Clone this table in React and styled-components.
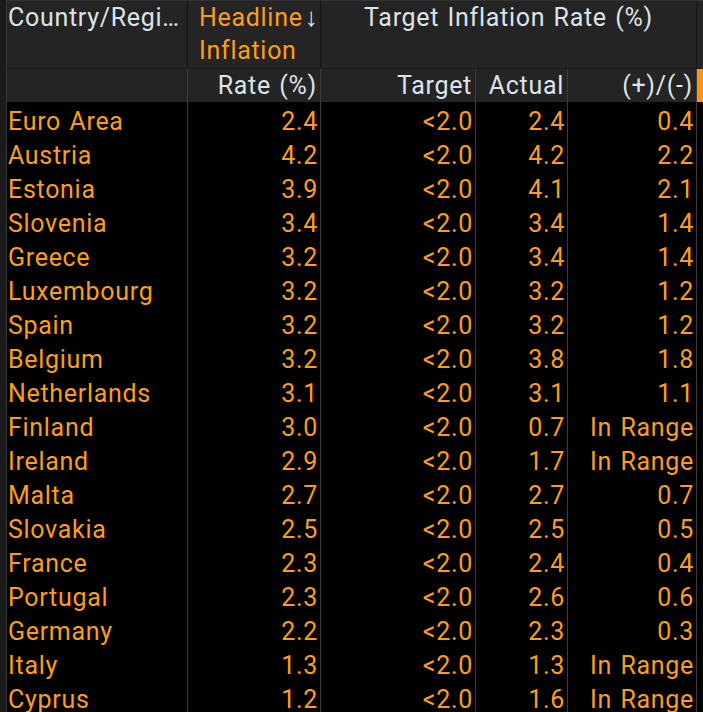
import React from "react";
import styled, { createGlobalStyle } from "styled-components";

const Global = createGlobalStyle`
  html, body { margin: 0; padding: 0; background: #1b1b1b; }
  body { font-family: Roboto, "Noto Sans", sans-serif; }
`;

const COLS = "181px 133px 155px 92px 129px 6px";
const ORANGE = "#fb9e1e";
const HEAD = "#dde3ea";

const Frame = styled.div`
  margin-left: 6px;
  border-left: 1px solid #3a3a3a;
  width: 696px;
  height: 712px;
  overflow: hidden;
  background: #000;
  font-size: 25px;
  line-height: 34px;
  letter-spacing: 0.7px;
  word-spacing: 1.5px;
`;

const HeadTop = styled.div`
  display: grid;
  grid-template-columns: 181px 133px 376px 6px;
  height: 68px;
  background: #242424;
  border-top: 1px solid #333;
  box-sizing: border-box;
`;

const HeadBottom = styled.div`
  display: grid;
  grid-template-columns: ${COLS};
  height: 34px;
  background: #242424;
  border-top: 1px solid #1a1a1a;
  box-sizing: border-box;
`;

const HCell = styled.div`
  box-sizing: border-box;
  border-right: 1px solid ${(p) => (p.$top ? "#141414" : "#3c3c3c")};
  color: ${(p) => (p.$accent ? ORANGE : HEAD)};
  text-align: ${(p) => p.$align || "left"};
  padding: ${(p) =>
    p.$align === "right" ? "0 3px 0 0" : p.$align === "center" ? "0" : `0 0 0 ${p.$indent || 1}px`};
  line-height: 33px;
  white-space: nowrap;
  overflow: hidden;
`;

const Arrow = styled.span`
  color: ${HEAD};
  margin-left: 2px;
  font-size: 26px;
`;

const Scroll = styled.div`
  background: ${(p) => (p.$on ? "#f7941d" : "transparent")};
`;

const Row = styled.div`
  display: grid;
  grid-template-columns: ${COLS};
  height: 34px;
`;

const Cell = styled.div`
  box-sizing: border-box;
  border-right: 1px solid #3c3c3c;
  color: ${ORANGE};
  text-align: ${(p) => p.$align || "right"};
  padding: ${(p) => (p.$align === "left" ? "3px 0 0 1px" : "3px 2px 0 0")};
  white-space: nowrap;
  overflow: hidden;
`;

const data = [
  ["Euro Area", "2.4", "<2.0", "2.4", "0.4"],
  ["Austria", "4.2", "<2.0", "4.2", "2.2"],
  ["Estonia", "3.9", "<2.0", "4.1", "2.1"],
  ["Slovenia", "3.4", "<2.0", "3.4", "1.4"],
  ["Greece", "3.2", "<2.0", "3.4", "1.4"],
  ["Luxembourg", "3.2", "<2.0", "3.2", "1.2"],
  ["Spain", "3.2", "<2.0", "3.2", "1.2"],
  ["Belgium", "3.2", "<2.0", "3.8", "1.8"],
  ["Netherlands", "3.1", "<2.0", "3.1", "1.1"],
  ["Finland", "3.0", "<2.0", "0.7", "In Range"],
  ["Ireland", "2.9", "<2.0", "1.7", "In Range"],
  ["Malta", "2.7", "<2.0", "2.7", "0.7"],
  ["Slovakia", "2.5", "<2.0", "2.5", "0.5"],
  ["France", "2.3", "<2.0", "2.4", "0.4"],
  ["Portugal", "2.3", "<2.0", "2.6", "0.6"],
  ["Germany", "2.2", "<2.0", "2.3", "0.3"],
  ["Italy", "1.3", "<2.0", "1.3", "In Range"],
  ["Cyprus", "1.2", "<2.0", "1.6", "In Range"],
];

export default function App() {
  return (
    <>
      <Global />
      <Frame>
        <HeadTop>
          <HCell $top>Country/Regi…</HCell>
          <HCell $top $accent $indent={11}>
            Headline<Arrow>↓</Arrow>
            <br />
            Inflation
          </HCell>
          <HCell $top $align="center">
            Target Inflation Rate (%)
          </HCell>
          <Scroll />
        </HeadTop>
        <HeadBottom>
          <HCell />
          <HCell $align="right">Rate (%)</HCell>
          <HCell $align="right">Target</HCell>
          <HCell $align="right">Actual</HCell>
          <HCell $align="right">(+)/(-)</HCell>
          <Scroll $on />
        </HeadBottom>
        {data.map((r) => (
          <Row key={r[0]}>
            <Cell $align="left">{r[0]}</Cell>
            <Cell>{r[1]}</Cell>
            <Cell>{r[2]}</Cell>
            <Cell>{r[3]}</Cell>
            <Cell>{r[4]}</Cell>
            <Scroll />
          </Row>
        ))}
      </Frame>
    </>
  );
}
